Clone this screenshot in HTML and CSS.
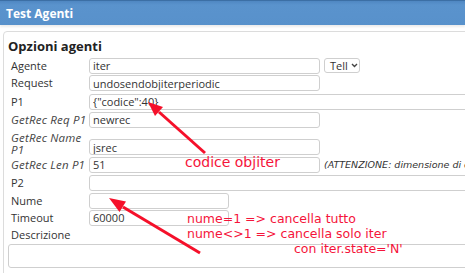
FILE: index.html
```html
<!DOCTYPE html>
<html lang="it">
<head>
    <meta charset="UTF-8">
    <title>Test Agenti</title>
    <link rel="stylesheet" href="styles.css">
</head>
<body>
    <div class="page">
        <div class="topbar">Test Agenti</div>

        <div class="panel">
            <h2>Opzioni agenti</h2>

            <div class="row">
                <label>Agente</label>
                <input type="text" value="iter">
                <div class="select">Tell
                    <svg class="chev" width="7" height="5" viewBox="0 0 7 5"><path d="M1 1 L3.5 3.5 L6 1" fill="none" stroke="#444" stroke-width="1.4"/></svg>
                </div>
            </div>
            <div class="row r18">
                <label>Request</label>
                <input type="text" value="undosendobjiterperiodic">
            </div>
            <div class="row r19">
                <label>P1</label>
                <input type="text" class="wide" value='{"codice":40}'>
            </div>
            <div class="row">
                <label><i>GetRec Req P1</i></label>
                <input type="text" value="newrec">
            </div>
            <div class="row tall">
                <label><i>GetRec Name P1</i></label>
                <input type="text" value="jsrec">
            </div>
            <div class="row">
                <label><i>GetRec Len P1</i></label>
                <input type="text" value="51">
                <span class="hint">(ATTENZIONE: dimensione di og</span>
            </div>
            <div class="row r19">
                <label>P2</label>
                <input type="text" class="wide" value="">
            </div>
            <div class="row">
                <label>Nume</label>
                <input type="text" class="short" value="">
            </div>
            <div class="row">
                <label>Timeout</label>
                <input type="text" class="short" value="60000">
            </div>
            <div class="row r18">
                <label>Descrizione</label>
            </div>
            <textarea></textarea>
        </div>

        <!-- annotazioni -->
        <div class="note note-codice">codice objiter</div>
        <div class="note note-nume">nume=1 =&gt; cancella tutto<br>nume&lt;&gt;1 =&gt; cancella solo iter</div>
        <div class="note note-state">con iter.state='N'</div>

        <svg class="arrows" width="468" height="273" viewBox="0 0 468 273">
            <line x1="205" y1="153" x2="159" y2="112" stroke="#f5102a" stroke-width="3"/>
            <polygon points="148,102 163,107 155,116" fill="#f5102a"/>
            <line x1="200" y1="253" x2="123" y2="207" stroke="#f5102a" stroke-width="3"/>
            <polygon points="109,198 126,201.5 119.5,212" fill="#f5102a"/>
        </svg>
    </div>
</body>
</html>
```

FILE: styles.css
```css
body {
    margin: 0;
    font-family: "Open Sans", Arial, sans-serif;
    font-size: 11px;
    color: #333;
    background: #fff;
}
.page {
    position: relative;
    width: 465px;
    height: 273px;
    overflow: hidden;
}
.topbar {
    height: 24px;
    line-height: 25px;
    padding-left: 6px;
    background: linear-gradient(#4f87c2, #5a93cd 4px, #5891cb);
    border-top: 1px solid #3c6fa5;
    color: #fff;
    font-weight: bold;
    font-size: 12px;
    box-shadow: 0 2px 2px rgba(0, 0, 0, 0.08);
}
.panel {
    margin: 6px 0 0 3px;
    width: 560px;
    padding: 6px 4px 10px 4px;
    border: 1px solid #dcdcdc;
    border-radius: 4px;
}
.panel h2 {
    margin: 0 0 2px 0;
    font-size: 13px;
    line-height: 17px;
    color: #222;
}
.row {
    display: flex;
    align-items: center;
    height: 17px;
}
.row.r18 {
    height: 18px;
}
.row.r19 {
    height: 19px;
}
.row.tall {
    height: 28px;
    align-items: flex-end;
}
.row.tall input {
    margin-bottom: 1px;
}
.row label {
    width: 78px;
    padding-left: 3px;
    line-height: 12px;
    flex-shrink: 0;
}
.row label i {
    color: #444;
    font-size: 11.5px;
    letter-spacing: 0.2px;
}
input {
    box-sizing: border-box;
    width: 231px;
    height: 16px;
    margin: 0;
    padding: 0 3px;
    border: 1px solid #cfcfcf;
    border-radius: 3px;
    font-family: "Open Sans", Arial, sans-serif;
    font-size: 11px;
    color: #333;
}
input.wide {
    width: 420px;
}
input.short {
    width: 140px;
}
.select {
    box-sizing: border-box;
    display: flex;
    align-items: center;
    gap: 3px;
    height: 15px;
    width: 36px;
    margin-left: 4px;
    padding-left: 5px;
    border: 1px solid #cfcfcf;
    border-radius: 3px;
}
.hint {
    margin-left: 4px;
    font-family: "DejaVu Sans", Verdana, sans-serif;
    font-style: italic;
    font-size: 9.5px;
    white-space: nowrap;
    color: #333;
}
textarea {
    display: block;
    box-sizing: border-box;
    width: 540px;
    height: 24px;
    margin: 0;
    border: 1px solid #cfcfcf;
    border-radius: 3px;
    resize: none;
}
.note {
    position: absolute;
    font-family: "DejaVu Sans", sans-serif;
    color: #f5143a;
    white-space: nowrap;
}
.note-codice {
    left: 185px;
    top: 154px;
    font-size: 14px;
    line-height: 17px;
}
.note-nume {
    left: 187px;
    top: 211px;
    font-size: 12.5px;
    line-height: 15px;
}
.note-state {
    left: 294px;
    top: 241px;
    font-size: 12.5px;
    line-height: 15px;
}
.arrows {
    position: absolute;
    left: 0;
    top: 0;
}
```
